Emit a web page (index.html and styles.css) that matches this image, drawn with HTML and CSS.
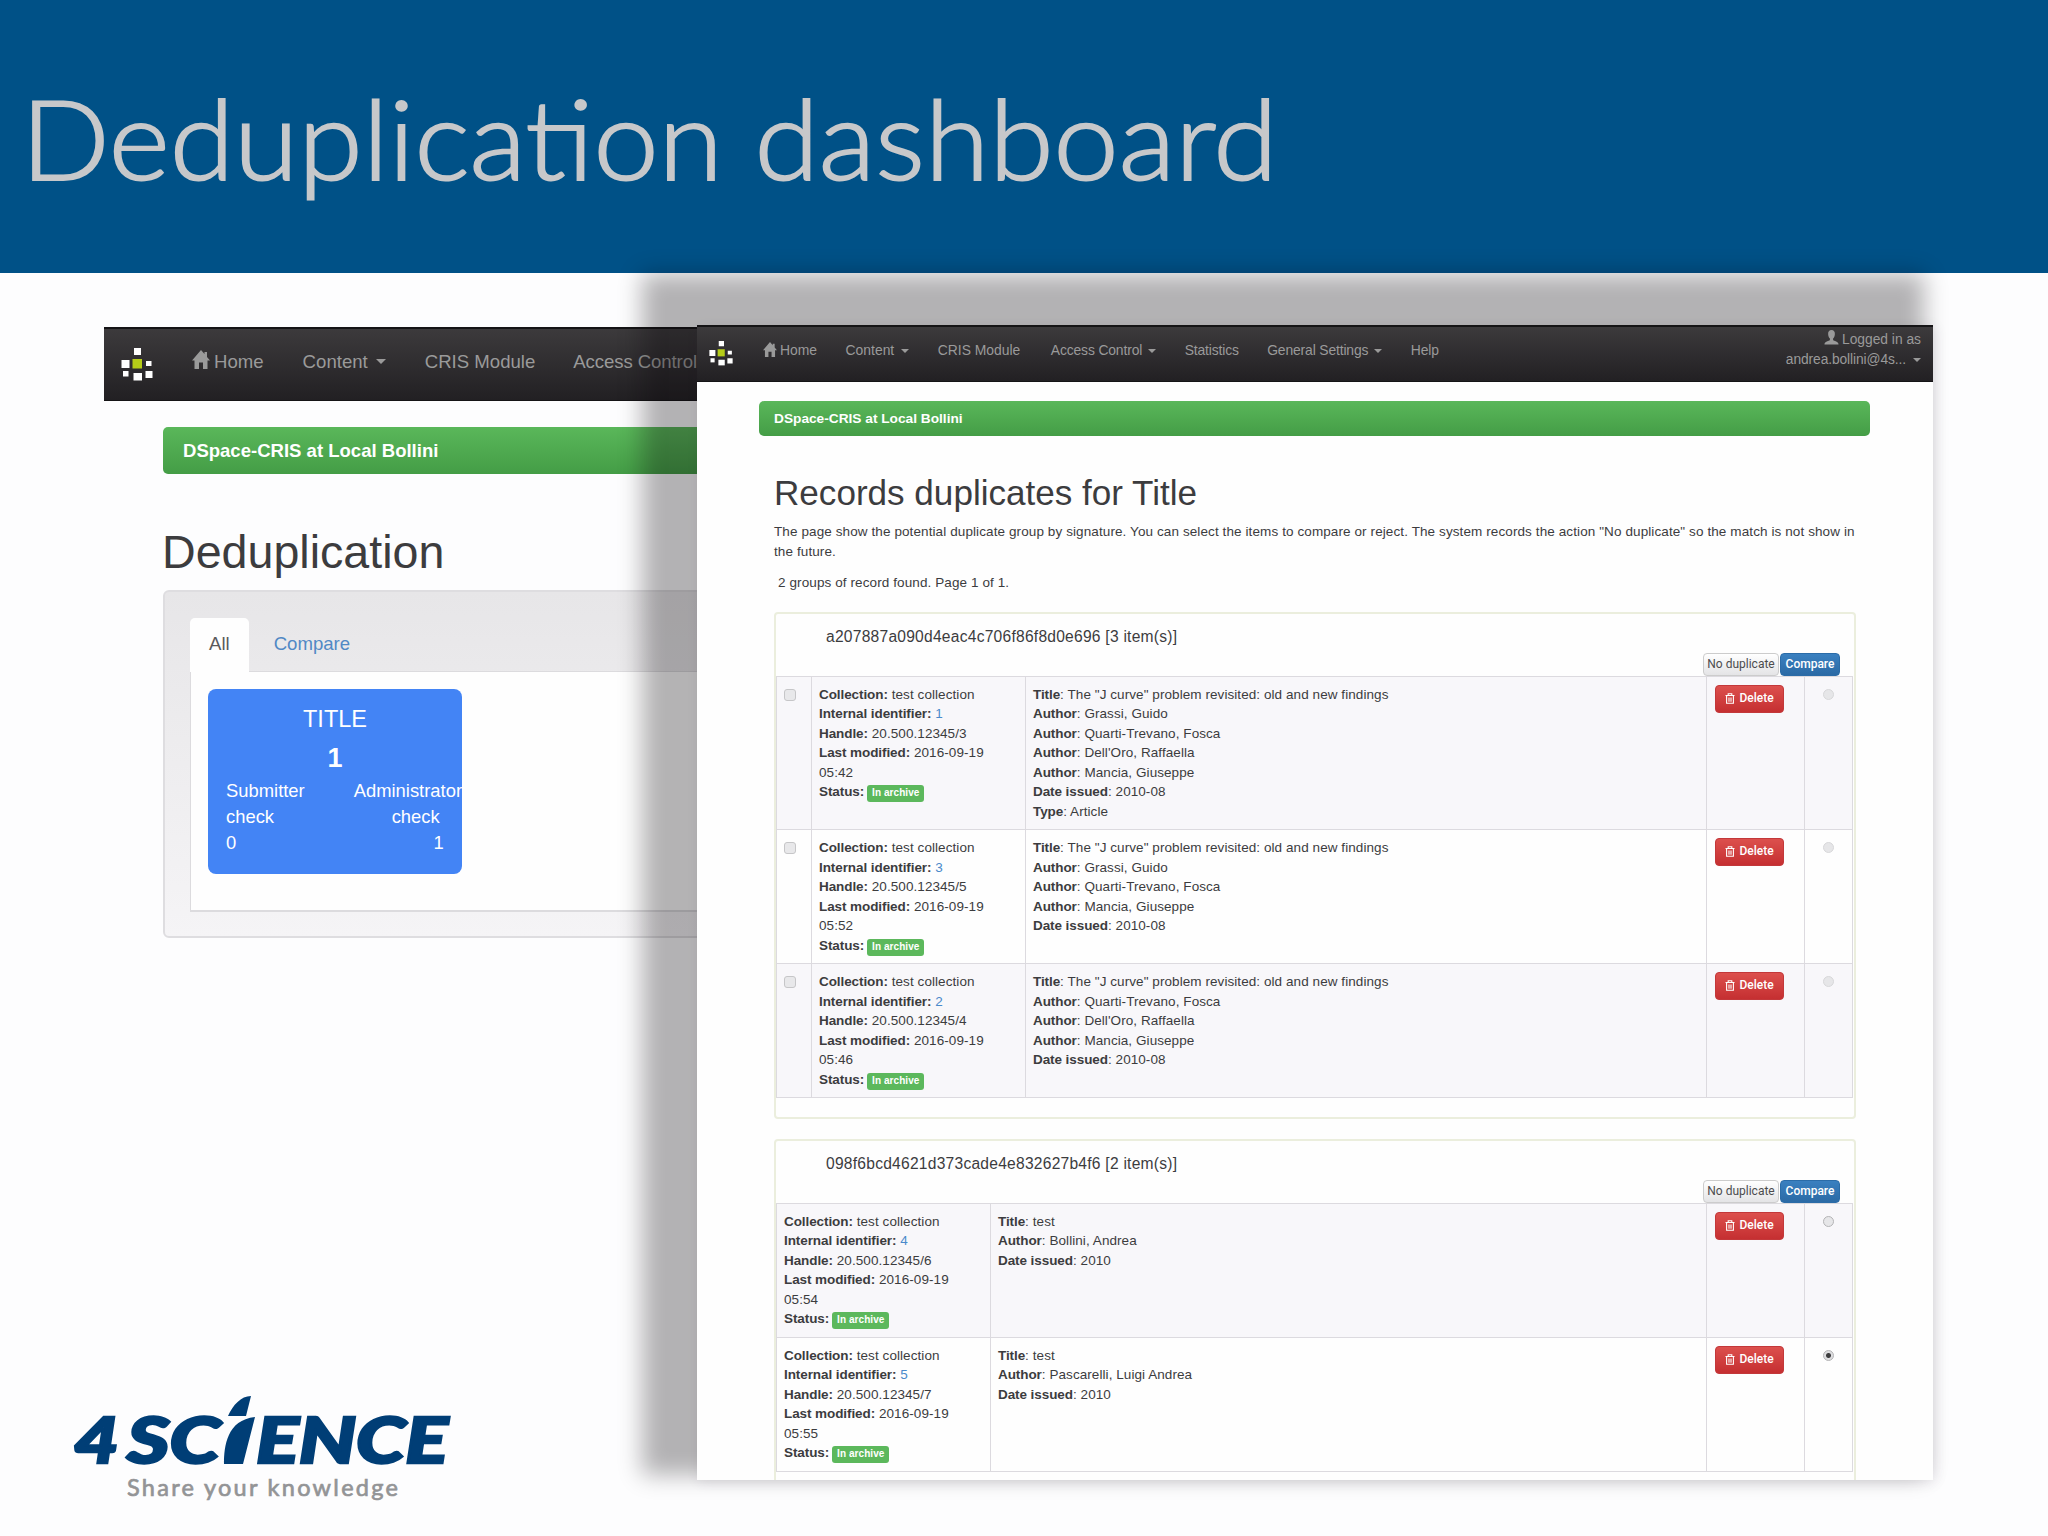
FILE: index.html
```html
<!DOCTYPE html>
<html lang="en">
<head>
  <meta charset="UTF-8" />
  <title>Deduplication dashboard</title>
  <link rel="stylesheet" href="styles.css">
</head>
<body>

<svg class="defs" width="0" height="0">
  <symbol id="logo" viewBox="0 0 32 34">
    <g fill="#fff">
      <rect x="13" y="1" width="7" height="7" />
      <rect x="0.5" y="13" width="8" height="8" />
      <rect x="25" y="14" width="5.5" height="5" />
      <rect x="2" y="24" width="5.5" height="5.5" />
      <rect x="12.5" y="26" width="8.5" height="7.5" />
      <rect x="24.5" y="24" width="7" height="7" />
    </g>
    <rect x="11.5" y="12" width="9.5" height="9.5" fill="#b5cc18" />
  </symbol>
  <symbol id="home" viewBox="0 0 18 19">
    <path d="M9 0 L0 10.5 H2.5 V19 H7 V12.5 H11 V19 H15.5 V10.5 H18 L15 7 V2 H12.5 V4 Z" fill="currentColor" />
  </symbol>
  <symbol id="user" viewBox="0 0 16 16">
    <path d="M8 0 C5.5 0 4.3 1.8 4.4 4.2 C4.5 6.3 5.2 8 6.3 9 V11 C4 12 .5 12.6 .5 15.5 H15.5 C15.5 12.6 12 12 9.7 11 V9 C10.8 8 11.5 6.3 11.6 4.2 C11.7 1.8 10.5 0 8 0 Z" fill="currentColor" />
  </symbol>
  <symbol id="trash" viewBox="0 0 10 11">
    <path d="M0.5 2.5 H9.5 M3.2 2.3 V.8 H6.8 V2.3 M1.6 3 V10.2 H8.4 V3 M4 4.5 V8.7 M6 4.5 V8.7" fill="none" stroke="currentColor" stroke-width="1.1" />
  </symbol>
</svg>

<div class="slide">
  <header class="slide-title">
    <h1>Deduplication dashboard</h1>
  </header>

  <section class="shot shot-left">
    <nav class="navbar">
      <svg class="brand"><use href="#logo" /></svg>
      <ul>
        <li><svg class="home"><use href="#home" /></svg>Home</li>
        <li>Content<i class="caret"></i></li>
        <li>CRIS Module</li>
        <li>Access Control</li>
      </ul>
    </nav>
    <div class="breadcrumb">DSpace-CRIS at Local Bollini</div>
    <h2>Deduplication</h2>
    <div class="well">
      <div class="tabs">
        <span class="tab active">All</span>
        <a class="tab">Compare</a>
      </div>
      <div class="tab-content">
        <div class="card">
          <div class="card-title">TITLE</div>
          <div class="card-total">1</div>
          <div class="card-checks">
            <div>Submitter<br>check<br>0</div>
            <div class="admin">Administrator<br><span class="admin-check">check</span><br>1</div>
          </div>
        </div>
      </div>
    </div>
  </section>

  <section class="shot shot-right">
    <nav class="navbar">
      <svg class="brand"><use href="#logo" /></svg>
      <ul>
        <li><svg class="home"><use href="#home" /></svg>Home</li>
        <li>Content<i class="caret"></i></li>
        <li>CRIS Module</li>
        <li>Access Control<i class="caret"></i></li>
        <li>Statistics</li>
        <li>General Settings<i class="caret"></i></li>
        <li>Help</li>
      </ul>
      <div class="user">
        <svg><use href="#user" /></svg>Logged in as<br>
        <span class="mail">andrea.bollini@4s...</span><i class="caret"></i>
      </div>
    </nav>
    <div class="breadcrumb">DSpace-CRIS at Local Bollini</div>
    <div class="content">
      <h2>Records duplicates for Title</h2>
      <p class="intro">The page show the potential duplicate group by signature. You can select the items to compare or reject. The system records the action "No duplicate" so the match is not show in<br>the future.</p>
      <p class="found">2 groups of record found. Page 1 of 1.</p>

      <div class="group">
        <div class="group-title">a207887a090d4eac4c706f86f8d0e696 [3 item(s)]</div>
        <div class="group-actions"><button class="btn-default">No duplicate</button><button class="btn-primary">Compare</button></div>
        <table>
          <tr>
            <td class="check"><i class="checkbox"></i></td>
            <td class="item"><b>Collection:</b> test collection<br><b>Internal identifier:</b> <a>1</a><br><b>Handle:</b> 20.500.12345/3<br><b>Last modified:</b> 2016-09-19<br>05:42<br><b>Status:</b> <span class="label">In archive</span></td>
            <td><b>Title</b>: The "J curve" problem revisited: old and new findings<br><b>Author</b>: Grassi, Guido<br><b>Author</b>: Quarti-Trevano, Fosca<br><b>Author</b>: Dell'Oro, Raffaella<br><b>Author</b>: Mancia, Giuseppe<br><b>Date issued</b>: 2010-08<br><b>Type</b>: Article</td>
            <td class="action"><button class="btn-danger"><svg><use href="#trash" /></svg>Delete</button></td>
            <td class="pick"><i class="radio disabled"></i></td>
          </tr>
          <tr>
            <td class="check"><i class="checkbox"></i></td>
            <td class="item"><b>Collection:</b> test collection<br><b>Internal identifier:</b> <a>3</a><br><b>Handle:</b> 20.500.12345/5<br><b>Last modified:</b> 2016-09-19<br>05:52<br><b>Status:</b> <span class="label">In archive</span></td>
            <td><b>Title</b>: The "J curve" problem revisited: old and new findings<br><b>Author</b>: Grassi, Guido<br><b>Author</b>: Quarti-Trevano, Fosca<br><b>Author</b>: Mancia, Giuseppe<br><b>Date issued</b>: 2010-08</td>
            <td class="action"><button class="btn-danger"><svg><use href="#trash" /></svg>Delete</button></td>
            <td class="pick"><i class="radio disabled"></i></td>
          </tr>
          <tr>
            <td class="check"><i class="checkbox"></i></td>
            <td class="item"><b>Collection:</b> test collection<br><b>Internal identifier:</b> <a>2</a><br><b>Handle:</b> 20.500.12345/4<br><b>Last modified:</b> 2016-09-19<br>05:46<br><b>Status:</b> <span class="label">In archive</span></td>
            <td><b>Title</b>: The "J curve" problem revisited: old and new findings<br><b>Author</b>: Quarti-Trevano, Fosca<br><b>Author</b>: Dell'Oro, Raffaella<br><b>Author</b>: Mancia, Giuseppe<br><b>Date issued</b>: 2010-08</td>
            <td class="action"><button class="btn-danger"><svg><use href="#trash" /></svg>Delete</button></td>
            <td class="pick"><i class="radio disabled"></i></td>
          </tr>
        </table>
      </div>

      <div class="group">
        <div class="group-title">098f6bcd4621d373cade4e832627b4f6 [2 item(s)]</div>
        <div class="group-actions"><button class="btn-default">No duplicate</button><button class="btn-primary">Compare</button></div>
        <table>
          <tr>
            <td class="item"><b>Collection:</b> test collection<br><b>Internal identifier:</b> <a>4</a><br><b>Handle:</b> 20.500.12345/6<br><b>Last modified:</b> 2016-09-19<br>05:54<br><b>Status:</b> <span class="label">In archive</span></td>
            <td><b>Title</b>: test<br><b>Author</b>: Bollini, Andrea<br><b>Date issued</b>: 2010</td>
            <td class="action"><button class="btn-danger"><svg><use href="#trash" /></svg>Delete</button></td>
            <td class="pick"><i class="radio"></i></td>
          </tr>
          <tr>
            <td class="item"><b>Collection:</b> test collection<br><b>Internal identifier:</b> <a>5</a><br><b>Handle:</b> 20.500.12345/7<br><b>Last modified:</b> 2016-09-19<br>05:55<br><b>Status:</b> <span class="label">In archive</span></td>
            <td><b>Title</b>: test<br><b>Author</b>: Pascarelli, Luigi Andrea<br><b>Date issued</b>: 2010</td>
            <td class="action"><button class="btn-danger"><svg><use href="#trash" /></svg>Delete</button></td>
            <td class="pick"><i class="radio checked"></i></td>
          </tr>
        </table>
      </div>
    </div>
  </section>

  <svg class="company" viewBox="0 0 400 120">
    <g class="company-name">
      <text x="4" y="73" textLength="45" lengthAdjust="spacingAndGlyphs">4</text>
      <text x="57" y="73" textLength="93" lengthAdjust="spacingAndGlyphs">SC</text>
      <text x="186" y="73" textLength="192" lengthAdjust="spacingAndGlyphs">ENCE</text>
    </g>
    <path d="M158 26 C163 15 171 6 181 6 L176 26 Z M154 74 C154 56 157 30 185 27 L173 74 Z" fill="#003e76" />
    <text class="company-claim" x="57" y="106" textLength="271">Share your knowledge</text>
  </svg>
</div>

</body>
</html>
```

FILE: styles.css
```css
* {
  box-sizing: border-box;
}
body {
  margin: 0;
  font-family: "Liberation Sans", Arial, sans-serif;
  color: #3c3c3e;
}
.defs {
  display: none;
}
.slide {
  position: relative;
  width: 2048px;
  height: 1536px;
  overflow: hidden;
  background: #fdfdfe;
}
.slide-title {
  height: 273px;
  padding: 70px 0 0 21px;
  background: #005187;
}
.slide-title h1 {
  width: 1200px;
  margin: 0;
  font-family: Lato, sans-serif;
  font-size: 111px;
  font-weight: 300;
  line-height: 134px;
  color: #c7c8ca;
  white-space: nowrap;
  transform: scaleX(1.052);
  transform-origin: 0 50%;
  -webkit-text-stroke: 2px #c7c8ca;
}

/* screenshots laid on the slide */
.shot {
  position: absolute;
  overflow: hidden;
  background: #fefefe;
}
.shot-left {
  left: 104px;
  top: 327px;
  width: 600px;
  height: 640px;
  background: none;
  font-size: 18.6px;
  line-height: 26px;
}
.shot-right {
  left: 697px;
  top: 325px;
  width: 1236px;
  height: 1155px;
  font-size: 13.5px;
  line-height: 19.5px;
  box-shadow: -32px -28px 22px 23px rgba(10, 5, 10, 0.3), 2px 2px 12px rgba(60, 40, 80, 0.1);
}

/* navbar */
.navbar {
  display: flex;
  border-top: 2px solid #151416;
  border-bottom: 1px solid #151416;
  background: linear-gradient(#3c3a3c, #222023);
  color: #9a9a9a;
}
.navbar ul {
  display: flex;
  margin: 0;
  padding: 0;
  list-style: none;
  white-space: nowrap;
}
.navbar li {
  display: flex;
  align-items: center;
}
.caret {
  display: inline-block;
  border-style: solid;
  border-color: currentColor transparent transparent;
}
.shot-left .navbar {
  height: 74px;
}
.shot-left .brand {
  width: 32px;
  height: 34px;
  margin: 18px 39px 0 17px;
}
.shot-left ul {
  height: 65px;
  gap: 39px;
}
.shot-left .home {
  width: 18px;
  height: 19px;
  margin: -4px 4px 0 0;
}
.shot-left .caret {
  margin-left: 8px;
  border-width: 5px 5px 0;
}
.shot-left li:last-child {
  margin-left: -1px;
  letter-spacing: -0.1px;
}
.shot-right .navbar {
  height: 57px;
}
.shot-right .brand {
  width: 24px;
  height: 26px;
  margin: 13px 30px 0 12px;
}
.shot-right ul {
  height: 47px;
  gap: 28.5px;
  font-size: 13.9px;
}
.shot-right li:nth-child(n+4) {
  letter-spacing: -0.15px;
}
.shot-right li:nth-child(4) {
  margin-left: 2px;
}
.shot-right .home {
  width: 14px;
  height: 15px;
  margin: -3px 3px 0 0;
}
.shot-right .caret {
  margin-left: 7px;
  border-width: 4px 4px 0;
}
.shot-right li:nth-child(n+4) .caret {
  margin-left: 6px;
}
.user {
  margin-left: auto;
  padding: 3px 12px 0 0;
  text-align: right;
  font-size: 13.8px;
}
.user .mail {
  letter-spacing: -0.1px;
}
.user svg {
  width: 15px;
  height: 15px;
  margin-right: 3px;
  vertical-align: -1px;
}
.user .caret {
  vertical-align: 2px;
}

/* green bar */
.breadcrumb {
  border-radius: 5px;
  background: linear-gradient(#5ab75a, #449d46);
  color: #fff;
  font-weight: bold;
}
.shot-left .breadcrumb {
  height: 47px;
  margin: 26px 0 0 59px;
  padding: 11px 20px;
  font-size: 18.55px;
}
.shot-right .breadcrumb {
  width: 1111px;
  height: 35px;
  margin: 19px 0 0 62px;
  padding: 8px 15px;
  font-size: 13.7px;
}

h2 {
  margin: 0;
  font-weight: normal;
}
.shot-left h2 {
  margin: 51px 0 11px 58px;
  font-size: 46.6px;
  line-height: 54px;
}
.well {
  height: 348px;
  margin-left: 59px;
  padding: 26px 0 0 25px;
  border: 2px solid #dedde0;
  border-radius: 6px;
  background: linear-gradient(#e7e6e8, #f5f4f6);
}
.tabs {
  display: flex;
  height: 53px;
}
.tab {
  padding: 13px 19px;
  border-radius: 5px 5px 0 0;
  color: #5189c5;
}
.tab.active {
  z-index: 1;
  margin-bottom: -1px;
  background: #fefefe;
  color: #5a5a5c;
}
.tab:last-child {
  padding-left: 25px;
}
.tab-content {
  height: 241px;
  padding: 17px;
  border: 1px solid #dcdbde;
  border-width: 1px 0 2px 1px;
  background: #fefefe;
}
.card {
  width: 254px;
  height: 185px;
  padding-top: 16px;
  border-radius: 8px;
  background: #4384f5;
  color: #fff;
  overflow: hidden;
}
.card-title,
.card-total {
  text-align: center;
}
.card-title {
  font-size: 23.5px;
  line-height: 28px;
}
.card-total {
  height: 45px;
  font-size: 27px;
  font-weight: bold;
  line-height: 50px;
}
.card-checks {
  display: flex;
  font-size: 18.4px;
  padding-left: 18px;
}
.admin {
  width: 90px;
  margin-left: 49px;
  text-align: right;
}
.admin-check {
  margin-right: 4px;
}

/* records page */
.content {
  width: 1082px;
  margin-left: 77px;
}
.content h2 {
  margin-top: 35px;
  font-size: 35.1px;
  line-height: 44px;
}
.intro,
.found {
  margin: 0;
  white-space: nowrap;
  letter-spacing: 0.1px;
}
.intro {
  margin-top: 7px;
}
.found {
  margin: 12px 0 19px 4px;
}
.group {
  height: 507px;
  margin-bottom: 20px;
  padding: 13px 1px 0 0;
  border: 2px solid #ebeedd;
  border-radius: 4px;
}
.group-title {
  padding-left: 50px;
  font-size: 15.6px;
  line-height: 20px;
  letter-spacing: 0.24px;
}
.group-actions {
  display: flex;
  justify-content: flex-end;
  gap: 1px;
  height: 29px;
  padding: 6px 13px 0 0;
}
button {
  padding: 0;
  border: 1px solid #ccc;
  border-radius: 4px;
  font-family: Roboto, sans-serif;
  font-size: 12px;
  color: #fff;
}
.btn-default {
  width: 76px;
  height: 23px;
  background: linear-gradient(#fff, #e4e4e6);
  color: #4c4c4e;
}
.btn-primary {
  width: 60px;
  height: 23px;
  border-color: #2b6ca8;
  background: linear-gradient(#3a80c0, #2b6aa5);
  font-weight: 500;
}
.btn-danger {
  display: block;
  width: 69px;
  height: 28px;
  padding-bottom: 2px;
  border-color: #c3383a;
  background: linear-gradient(#dc504d, #c52f31);
  font-weight: 500;
}
.btn-danger svg {
  width: 10px;
  height: 11px;
  margin-right: 4px;
  vertical-align: -2px;
}
table {
  width: 100%;
  border-collapse: collapse;
  table-layout: fixed;
}
td {
  padding: 8px 8px 8px 7px;
  border: 1px solid #dcdadf;
  vertical-align: top;
  line-height: 19.5px;
  letter-spacing: 0.07px;
}
td b {
  letter-spacing: -0.08px;
}
tr:nth-child(odd) {
  background: #f8f7fa;
}
td.check {
  width: 35px;
  padding: 12px 7px;
  line-height: 0;
}
td.item {
  width: 214px;
}
td.action {
  width: 98px;
  padding-left: 8px;
}
td.pick {
  width: 48px;
  padding: 12px 0;
  text-align: center;
  line-height: 0;
}
td a {
  color: #4a8acb;
}
.label {
  display: inline-block;
  height: 17px;
  margin: -3px 0 -3px -1px;
  padding: 0 5px;
  border-radius: 3px;
  background: #5cb85c;
  color: #fff;
  font-size: 10px;
  font-weight: bold;
  line-height: 16px;
  vertical-align: 0;
}
.checkbox {
  display: inline-block;
  width: 12px;
  height: 12px;
  border: 1px solid #c6c6c8;
  border-radius: 3px;
  background: #e8e8ea;
}
.radio {
  display: inline-block;
  width: 11px;
  height: 11px;
  border: 1px solid #b4b4b6;
  border-radius: 50%;
  background: #e6e6e8;
}
.radio.disabled {
  border-color: #d8d8da;
}
.radio.checked {
  background: radial-gradient(#3c3c3e 2px, #dedee0 3px);
}

/* company logo */
.company {
  position: absolute;
  left: 70px;
  top: 1390px;
  width: 400px;
  height: 120px;
}
.company-name {
  fill: #003e76;
  stroke: #003e76;
  stroke-width: 2.5px;
  font-family: Lato, sans-serif;
  font-size: 63px;
  font-weight: 900;
  font-style: italic;
}
.company-claim {
  fill: #939496;
  stroke: #939496;
  stroke-width: 0.7px;
  font-family: Lato, sans-serif;
  font-size: 23.5px;
}
```
